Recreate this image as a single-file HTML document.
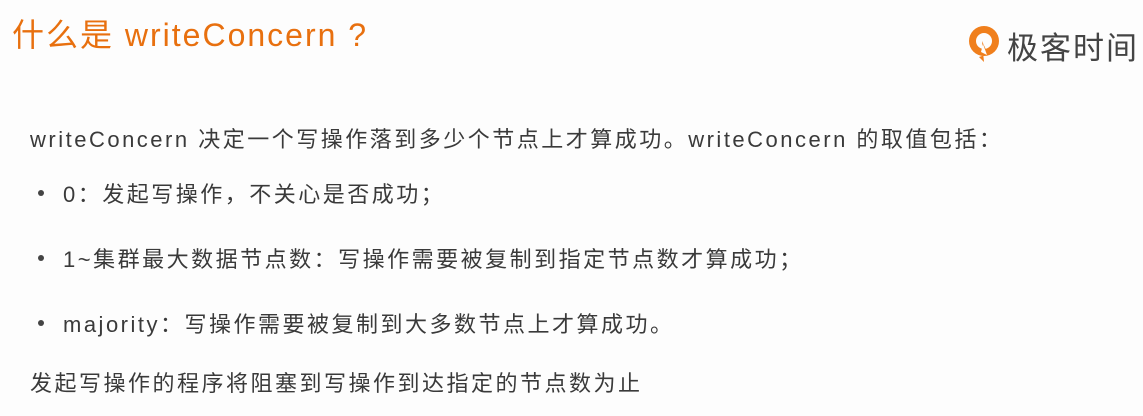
<!DOCTYPE html><html><head><meta charset="utf-8"><style>
body{margin:0;width:1143px;height:416px;background:#fdfdfd;overflow:hidden;position:relative;font-family:"Liberation Sans","Noto Sans CJK SC",sans-serif;color:#333}
.t{position:absolute;white-space:nowrap}
.h{left:12px;top:10px;font-size:32px;letter-spacing:2px;color:#e8700f}
.b{font-size:22px;letter-spacing:2.5px;color:#3a3a3a}
.dot{position:absolute;width:6px;height:6px;border-radius:50%;background:#444}
</style></head><body>
<div class="t h">什么是 writeConcern ?</div>
<svg style="position:absolute;left:965px;top:24px" width="40" height="40" viewBox="0 0 40 40">
<circle cx="19" cy="17" r="15" fill="#f07f1c"/>
<circle cx="19" cy="17" r="8" fill="#fdfdfd"/>
<path d="M17 17 L23 30 L14 33 L19 38 Z" fill="#f07f1c"/>
<path d="M18 20 L22 31 L16 28 Z" fill="#fdfdfd"/>
</svg>
<div class="t" style="left:1007px;top:23px;font-size:31px;letter-spacing:2px;color:#444">极客时间</div>
<div class="t b" style="left:30px;top:122px">writeConcern 决定一个写操作落到多少个节点上才算成功。writeConcern 的取值包括：</div>
<div class="dot" style="left:38px;top:190px"></div>
<div class="t b" style="left:63px;top:177px">0：发起写操作，不关心是否成功；</div>
<div class="dot" style="left:38px;top:255px"></div>
<div class="t b" style="left:63px;top:242px">1~集群最大数据节点数：写操作需要被复制到指定节点数才算成功；</div>
<div class="dot" style="left:38px;top:320px"></div>
<div class="t b" style="left:63px;top:307px">majority：写操作需要被复制到大多数节点上才算成功。</div>
<div class="t b" style="left:30px;top:366px">发起写操作的程序将阻塞到写操作到达指定的节点数为止</div>
</body></html>
